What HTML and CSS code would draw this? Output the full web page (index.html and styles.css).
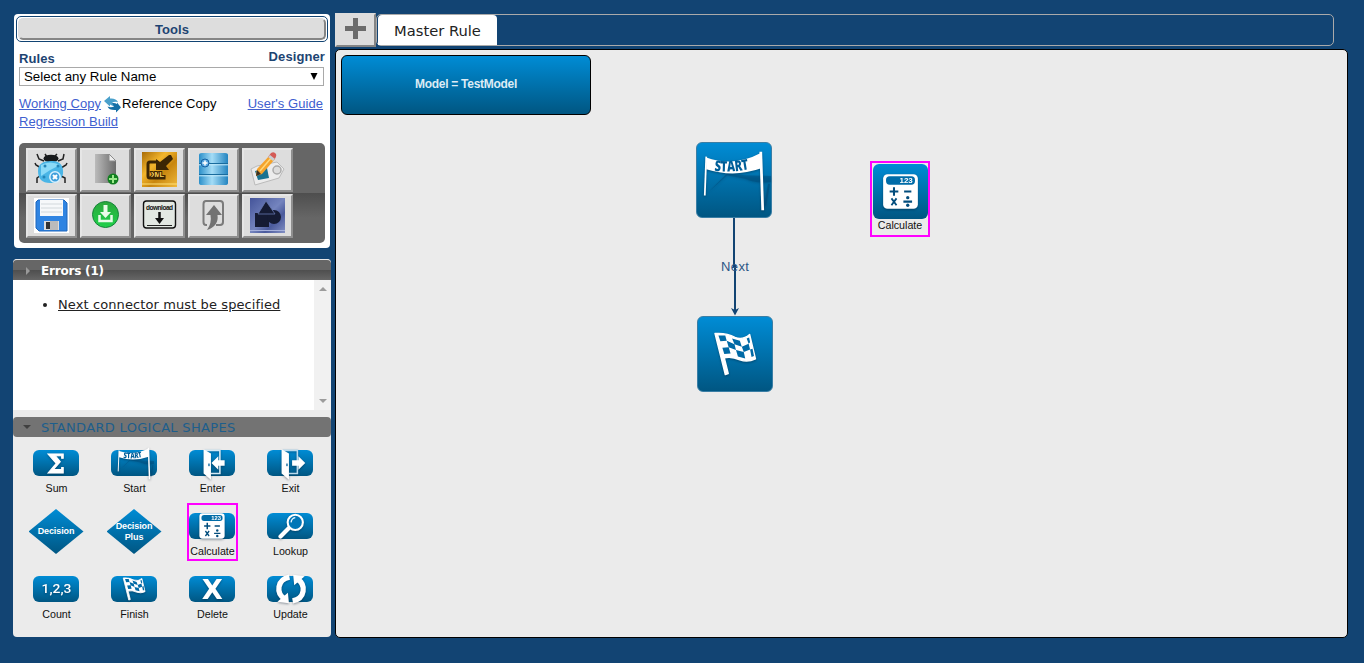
FILE: index.html
```
<!DOCTYPE html>
<html lang="en">
<head>
<meta charset="utf-8">
<title>Rule Designer</title>
<link rel="stylesheet" href="styles.css">
</head>
<body>
<svg class="defs" width="0" height="0" aria-hidden="true">
  <defs>
    <linearGradient id="gold" x1="0" y1="0" x2="1" y2="1"><stop offset="0" stop-color="#a86b08"/><stop offset=".35" stop-color="#f3b62c"/><stop offset=".6" stop-color="#c8860f"/><stop offset="1" stop-color="#f0b93a"/></linearGradient>
    <linearGradient id="steel" x1="0" y1="0" x2="1" y2="1"><stop offset="0" stop-color="#44549a"/><stop offset=".5" stop-color="#7484be"/><stop offset=".7" stop-color="#4a5a9c"/><stop offset="1" stop-color="#8390c4"/></linearGradient>
    <linearGradient id="page" x1="0" y1="0" x2="1" y2="0"><stop offset="0" stop-color="#bbb"/><stop offset="1" stop-color="#6b6b6b"/></linearGradient>
    <linearGradient id="cyan" x1="0" y1="0" x2="1" y2="0"><stop offset="0" stop-color="#2b8fc9"/><stop offset=".45" stop-color="#a4dcf6"/><stop offset="1" stop-color="#2384c0"/></linearGradient>
    <linearGradient id="green" x1="0" y1="0" x2="0" y2="1"><stop offset="0" stop-color="#2aa83c"/><stop offset="1" stop-color="#1fd04a"/></linearGradient>
  </defs>
  <symbol id="i-start" viewBox="0 0 76 76">
    <path d="M11 51 31 31 49 33 76 34V40Q60 42 50 37L31 33Z" fill="#004a78" opacity=".45"/>
    <path d="M74 42 70 64" stroke="#004a78" stroke-width="2" opacity=".5"/>
    <path d="M9.500 15Q38 25 66 10V26Q38 36 9.500 27Z" fill="#fff"/>
    <path d="M9.500 14 8 54" stroke="#fff" stroke-width="1.800" fill="none"/>
    <path d="M65.500 9 67.500 69" stroke="#fff" stroke-width="2.800" fill="none"/>
    <path id="banner" d="M18 28.500Q36 31 60 25.500" fill="none"/>
    <text class="g-start"><textPath href="#banner" textLength="36" lengthAdjust="spacingAndGlyphs">START</textPath></text>
  </symbol>
  <symbol id="i-flag" viewBox="0 0 76 76">
    <path d="M17.500 17Q29 16 38 21 46 24 53 18L59 43Q51 47 43 44 34 40 27 42L31 58 28 59Z" fill="#fff" stroke="#fff" stroke-width="1.500" stroke-linejoin="round"/>
    <path d="M21 19 28 19 29.500 24.500 23 25ZM35 22 43 24.500 45 30.500 37.500 28ZM29.500 24.500 37.500 28 39 34 31.500 31ZM45 30.500 52 27.500 53.500 33.500 47 36ZM25 31.500 31.500 31 33.500 37.500 27 38ZM39 34 47 36 48.500 42.500 41 40.500ZM50 22 52.500 21 53.500 26 52 27.500ZM53.500 33.500 56 32.500 57.500 40 55 41Z" fill="#006aa6"/>
  </symbol>
  <symbol id="i-calc" viewBox="0 0 76 76">
    <rect x="14" y="14" width="48" height="48" rx="6" fill="#fff"/>
    <rect x="18" y="17" width="40" height="11.500" rx="5" fill="#006ca8"/>
    <text class="g-123" x="55" y="26.800" text-anchor="end">123</text>
    <path d="M23 38H35M29 32V44M43 38H53M42 52H54" stroke="#024d7d" stroke-width="2.800"/>
    <circle cx="48" cy="46.500" r="2.300" fill="#024d7d"/><circle cx="48" cy="57" r="2.300" fill="#024d7d"/>
    <path d="M25.500 47.500 32.500 57M32.500 47.500 25.500 57" stroke="#024d7d" stroke-width="2.500"/>
  </symbol>
  <symbol id="i-sum" viewBox="0 0 76 76"><text class="g-sum" x="38" y="57" text-anchor="middle" textLength="34" lengthAdjust="spacingAndGlyphs">Σ</text></symbol>
  <symbol id="i-delete" viewBox="0 0 76 76"><text class="g-x" x="38.500" y="57" text-anchor="middle">X</text></symbol>
  <symbol id="i-count" viewBox="0 0 86 76"><text class="g-count" x="43" y="46" text-anchor="middle" textLength="57" lengthAdjust="spacingAndGlyphs">1,2,3</text></symbol>
  <symbol id="i-enter" viewBox="0 0 76 76">
    <path d="M24 14H53V58H36" fill="none" stroke="#d4e9f5" stroke-width="3"/>
    <path d="M22 12 36 20V70L22 58Z" fill="#fff"/><rect x="31" y="39" width="2.500" height="5" fill="#005f99"/>
    <path d="M37 38 50 25V33H62V43H50V51Z" fill="#fff"/>
  </symbol>
  <symbol id="i-exit" viewBox="0 0 76 76">
    <path d="M24 14H52V58H36" fill="none" stroke="#b9daed" stroke-width="3"/>
    <path d="M22 12 36 20V70L22 58Z" fill="#fff"/><rect x="31" y="39" width="2.500" height="5" fill="#005f99"/>
    <path d="M67 38 54 25V33H42V43H54V51Z" fill="#fff"/>
  </symbol>
  <symbol id="i-lookup" viewBox="0 0 76 76">
    <path d="M36 42 20 58" stroke="#fff" stroke-width="8" stroke-linecap="round"/>
    <circle cx="48" cy="31" r="14.500" fill="#0076b7" stroke="#fff" stroke-width="4"/>
    <path d="M40 31Q41 23 48 22" fill="none" stroke="#e8f6ff" stroke-width="2.500"/>
  </symbol>
  <symbol id="i-update" viewBox="0 0 76 76">
    <path d="M37 15.500C13 20 11 46 28 57M43 60.500C67 56 69 30 52 19" fill="none" stroke="#fff" stroke-width="10"/>
    <path d="M14 62 36 65 34 45ZM66 14 44 11 46 31Z" fill="#fff"/>
  </symbol>
</svg>

<div class="app">
  <aside class="sidebar">
    <section class="tools">
      <div class="title-frame"><h1 class="title">Tools</h1></div>
      <div class="labels"><span>Rules</span><span class="designer">Designer</span></div>
      <div class="select"><span>Select any Rule Name</span><svg width="8" height="7" viewBox="0 0 8 7"><path d="M.5 0H7.500L4 7Z"/></svg></div>
      <div class="links">
        <a class="working">Working Copy</a>
        <svg class="swap" width="17" height="17" viewBox="0 0 17 17"><path d="M0 5 6 0V2.500Q12 2 14 6 10 5 8 7L14 10Q9 11 6 8.500V10.500Z" fill="#4aa0cb"/><path d="M17 11.500 12 16.500V14Q5 14.500 3.500 10.500 7 12 10 10.500L8 7Q11 6.500 13 8V6.500Z" fill="#1670a6"/></svg>
        <span class="reference">Reference Copy</span>
        <a class="guide">User's Guide</a>
      </div>
      <div class="links"><a class="build">Regression Build</a></div>

      <div class="toolbar">
        <button class="tool"><svg width="36" height="36" viewBox="0 0 36 36"><path d="M11 10 6 8 4 3M25 10 30 8 31 3M8 17 3 14 2 12M28 17 33 14 34 12M8 24 4 27 4 32M28 25 32 27 32 32M14 6 12 3M21 6 24 3" fill="none" stroke="#222" stroke-width="1.500"/><ellipse cx="18" cy="7.500" rx="7.500" ry="3.800" fill="#17191b"/><path d="M18 10C27 9 31 15 30 23 28 30 23 32 17 32 9 32 5 28 5 20 5 13 10 10 18 10Z" fill="#4ab5e6"/><path d="M8 14Q17 9 27 14 18 18 8 25Z" fill="#8bdaf8"/><circle cx="12" cy="15" r="1.500" fill="#2485b8"/><circle cx="25" cy="15" r="1.500" fill="#2485b8"/><circle cx="11" cy="26" r="1.500" fill="#2485b8"/><circle cx="22" cy="26" r="5.200" fill="#3d9edb" stroke="#d8f1ff" stroke-width="1.500"/><path d="M20 24 24 28M24 24 20 28" stroke="#fff" stroke-width="2"/></svg></button>
        <button class="tool"><svg width="36" height="36" viewBox="0 0 36 36"><path d="M8 3H22L29 10V32H8Z" fill="url(#page)"/><path d="M22 3V10H29Z" fill="#ececec" stroke="#8b8b8b"/><circle cx="26" cy="28" r="5.500" fill="#128020"/><path d="M26 24V32M22 28H30" stroke="#9be88a" stroke-width="2"/></svg></button>
        <button class="tool"><svg width="36" height="36" viewBox="0 0 36 36"><rect x="1" y="1" width="35" height="35" fill="url(#gold)"/><path d="M1 33H36" stroke="#ffe27a" stroke-width="1"/><path d="M17 11H9Q7 11 7 13V25Q7 27 9 27H23V24" fill="none" stroke="#3c2604" stroke-width="3"/><path d="M30 4 32 8 25 15 28 19H15V8L19 11 28 4Z" fill="#3c2604"/><text class="g-xml" x="16.500" y="26" text-anchor="middle" textLength="13">XML</text></svg></button>
        <button class="tool"><svg width="36" height="36" viewBox="0 0 36 36"><path d="M4 4Q4 2 7 2H30Q33 2 33 4V32Q33 34 30 34H7Q4 34 4 32Z" fill="url(#cyan)"/><path d="M4 12.500H33M4 23.500H33" stroke="#196b9d" stroke-width="1.200"/><path d="M4 13.800H33M4 24.800H33" stroke="#c5ecfb"/><circle cx="10" cy="12" r="4" fill="#5ba9e0" stroke="#1662a4"/><path d="M10 9.500V14.500M7.500 12H12.500" stroke="#fff" stroke-width="1.500"/></svg></button>
        <button class="tool"><svg width="36" height="36" viewBox="0 0 36 36"><path d="M2 18 8 15 28 11 35 18 30 27 6 34Z" fill="#ececec" stroke="#bbb"/><circle cx="28" cy="19" r="4" fill="#ddd" stroke="#aaa" stroke-width="1.500"/><path d="M6 20 18 17 20 27 9 29Z" fill="#197391"/><path d="M8 18 21 4 26 8 13 23 7 25Z" fill="#f5a32b"/><path d="M11 20 23 6" stroke="#ffd87a" stroke-width="1.500"/><path d="M19 6 22 2Q25 0 27 3 28 5 25 9Z" fill="#d45b56"/><path d="M19 6 21 4 26 8 24 10Z" fill="#c9cfd3"/><path d="M7 25 8 19 12 23Z" fill="#3b3122"/></svg></button>
        <button class="tool"><svg width="36" height="36" viewBox="0 0 36 36"><rect x="1" y="1" width="35" height="35" fill="#fff"/><path d="M5 3H31L34 6V34H6L3 31V5Z" fill="#2f84e2" stroke="#1f66bd"/><rect x="7" y="3" width="23" height="16" fill="#f6f8fa"/><path d="M8 7H29M8 11H29M8 15H29" stroke="#d2d8dc"/><rect x="11" y="24" width="15" height="9" fill="#ddd"/><rect x="13" y="25" width="4" height="7" fill="#333"/><rect x="17" y="24" width="8" height="9" fill="#bbb"/></svg></button>
        <button class="tool"><svg width="36" height="36" viewBox="0 0 36 36"><circle cx="18.500" cy="17.500" r="13" fill="url(#green)" stroke="#16833a"/><path d="M18.500 8V17" stroke="#e9fbe9" stroke-width="4"/><path d="M13 15H24L18.500 21Z" fill="#e9fbe9"/><path d="M12.500 18V24H24.500V18" fill="none" stroke="#e9fbe9" stroke-width="2.500"/></svg></button>
        <button class="tool"><svg width="36" height="36" viewBox="0 0 36 36"><rect x="2.500" y="4" width="32" height="27" rx="3" fill="#e3e8e3" stroke="#111" stroke-width="1.400"/><text class="g-down" x="18.500" y="13" text-anchor="middle" textLength="27">download</text><path d="M18.500 15V23" stroke="#111" stroke-width="2.500"/><path d="M14 21H23L18.500 27Z" fill="#111"/><path d="M6 28.500H31" stroke="#222"/></svg></button>
        <button class="tool"><svg width="36" height="36" viewBox="0 0 36 36"><path d="M12 28H11Q8.500 28 8.500 25V7Q8.500 4 11 4H25Q28 4 28 7V25Q28 28 25 28H21" fill="none" stroke="#7b7b7b" stroke-width="2"/><path d="M19 8 27 18H22.500Q24 29 12 33 17 26 15.500 18H11Z" fill="#727272"/></svg></button>
        <button class="tool"><svg width="36" height="36" viewBox="0 0 36 36"><rect x="1" y="1" width="35" height="35" fill="url(#steel)"/><path d="M1 33.500H36" stroke="#a7b2dc"/><rect x="6" y="16" width="14" height="14" fill="#151b34"/><circle cx="25" cy="20" r="7" fill="#151b34"/><path d="M17 4 26 17H9Z" fill="#151b34" stroke="#6677b0" stroke-width=".8"/></svg></button>
      </div>
    </section>

    <section class="panel">
      <header class="errors-head"><svg width="4" height="8" viewBox="0 0 4 8"><path d="M0 0 4 4 0 8Z" fill="#999"/></svg><span>Errors (1)</span></header>
      <div class="errors">
        <ul class="error-list"><li><a>Next connector must be specified</a></li></ul>
        <div class="scroll"><svg width="8" height="4" viewBox="0 0 8 4"><path d="M0 4 4 0 8 4Z"/></svg><svg width="8" height="4" viewBox="0 0 8 4"><path d="M0 0 4 4 8 0Z"/></svg></div>
      </div>
      <header class="shapes-head"><svg width="8" height="4" viewBox="0 0 8 4"><path d="M0 0H8L4 4Z" fill="#404040"/></svg><span>STANDARD LOGICAL SHAPES</span></header>
      <div class="palette">
        <div class="shape"><div class="tile"><svg class="glyph"><use href="#i-sum"/></svg></div><span>Sum</span></div>
        <div class="shape"><div class="tile"><svg class="glyph"><use href="#i-start"/></svg></div><span>Start</span></div>
        <div class="shape"><div class="tile"><svg class="glyph"><use href="#i-enter"/></svg></div><span>Enter</span></div>
        <div class="shape"><div class="tile"><svg class="glyph"><use href="#i-exit"/></svg></div><span>Exit</span></div>
        <div class="shape"><div class="diamond">Decision</div></div>
        <div class="shape"><div class="diamond">Decision<br>Plus</div></div>
        <div class="shape picked"><div class="tile"><svg class="glyph"><use href="#i-calc"/></svg></div><span>Calculate</span></div>
        <div class="shape"><div class="tile"><svg class="glyph"><use href="#i-lookup"/></svg></div><span>Lookup</span></div>
        <div class="shape"><div class="tile"><svg class="glyph wide"><use href="#i-count"/></svg></div><span>Count</span></div>
        <div class="shape"><div class="tile"><svg class="glyph"><use href="#i-flag"/></svg></div><span>Finish</span></div>
        <div class="shape"><div class="tile"><svg class="glyph"><use href="#i-delete"/></svg></div><span>Delete</span></div>
        <div class="shape"><div class="tile"><svg class="glyph"><use href="#i-update"/></svg></div><span>Update</span></div>
      </div>
    </section>
  </aside>

  <main class="work">
    <div class="tabs">
      <button class="add"><svg width="21" height="21" viewBox="0 0 21 21"><path d="M8 0H13V8H21V13H13V21H8V13H0V8H8Z" fill="#6b6b6b"/></svg></button>
      <div class="strip"><div class="tab">Master Rule</div></div>
    </div>
    <div class="canvas">
      <div class="model">Model = TestModel</div>
      <svg class="wire" width="12" height="100" viewBox="0 0 12 100"><path d="M5 0V49H6V94" fill="none" stroke="#124473" stroke-width="2"/><path d="M2 91 6 93 10 91 6 98.500Z" fill="#124473"/></svg>
      <div class="next">Next</div>
      <div class="node start"><svg class="fill"><use href="#i-start"/></svg></div>
      <div class="node finish"><svg class="fill"><use href="#i-flag"/></svg></div>
      <div class="selected"><div class="node calc"><svg class="fill"><use href="#i-calc"/></svg></div><span>Calculate</span></div>
    </div>
  </main>
</div>
</body>
</html>
```
FILE: styles.css
```
* { box-sizing: border-box; }
body { margin: 0; height: 663px; overflow: hidden; background: #124473; font-family: "Liberation Sans", Arial, sans-serif; font-size: 13px; color: #000; }
svg { display: block; flex: none; }
.defs { position: absolute; }
button { padding: 0; font: inherit; }
a { color: #4060cf; text-decoration: underline; }

.app { display: flex; gap: 4px; padding: 13px 16px 0 13px; }
.sidebar { width: 318px; flex: none; padding-top: 1px; }

.tools { height: 234px; margin: 0 1px; padding: 2px; background: #fff; border-radius: 4px; }
.title-frame { height: 26px; padding: 1px; border: 1px solid #124473; border-radius: 5px; }
.title { display: flex; align-items: center; justify-content: center; height: 22px; margin: 0; border: 2px solid; border-color: #ddd #858585 #858585 #ddd; border-radius: 5px; background: #ddd; color: #1d4472; font-size: 13px; letter-spacing: .1px; }
.labels { display: flex; justify-content: space-between; height: 25px; padding: 9px 3px 0 3px; color: #1d4472; font-weight: bold; line-height: 15px; letter-spacing: .1px; }
.designer { margin-top: -2px; }
.select { display: flex; align-items: center; justify-content: space-between; width: 305px; height: 19px; margin-left: 3px; padding: 0 5px 0 4px; border: 1px solid #a9a9a9; font-size: 13.300px; }
.links { display: flex; height: 18px; margin-left: 3px; line-height: 18px; letter-spacing: .05px; }
.select + .links { margin-top: 9px; }
.swap { margin: 1px 1px 0 3px; }
.guide { margin-left: auto; margin-right: 5px; }
.toolbar { display: grid; grid-template-columns: repeat(5, 51px); grid-auto-rows: 44px; gap: 2px 3px; width: 306px; height: 100px; margin: 12px 0 0 3px; padding: 5px 7px; border-radius: 5px; background: linear-gradient(#666 0 50%, #4e4e4e 50%, #666 75%); }
.tool { display: flex; align-items: center; justify-content: center; padding: 0 2px 3px 0; border: 2px solid; border-color: #e6e6e6 #8f8f8f #8f8f8f #e6e6e6; background: #ddd; }

.panel { margin-top: 11px; height: 378px; background: #ebebeb; border-radius: 4px; overflow: hidden; }
.errors-head { display: flex; align-items: center; gap: 11px; height: 21px; padding: 1px 0 0 13px; border-top: 1px solid #e8e8e8; border-radius: 4px 4px 0 0; background: linear-gradient(#666 0 50%, #4e4e4e 50%, #666); color: #fff; font: bold 12px Verdana, "DejaVu Sans", sans-serif; letter-spacing: -.2px; }
.errors { display: flex; justify-content: space-between; height: 130px; background: #fff; }
.error-list { margin: 17px 0 0 45px; padding: 0; font: 13px/16px Verdana, "DejaVu Sans", sans-serif; letter-spacing: .1px; color: #222; }
.error-list a { color: #222; }
.scroll { display: flex; flex-direction: column; align-items: center; justify-content: space-between; width: 17px; padding: 7px 0; background: #f1f1f1; fill: #9c9c9c; }
.shapes-head { display: flex; align-items: center; gap: 10px; height: 20px; margin-top: 7px; padding-left: 10px; border-radius: 4px; background: #737373; color: #1d5e8c; font: 13px Verdana, "DejaVu Sans", sans-serif; letter-spacing: .32px; }
.palette { display: grid; grid-template-columns: repeat(4, 78px); grid-auto-rows: 63px; padding: 4px 0 0 4px; }
.shape { display: flex; flex-direction: column; align-items: center; width: 49px; height: 56px; margin: 0 14px 0 15px; padding-top: 9px; font-size: 10.700px; line-height: 13px; white-space: nowrap; color: #111; }
.shape > span { margin-top: 6px; }
.picked { outline: 2px solid #f0f; outline-offset: -1.500px; }
.tile { display: flex; align-items: center; justify-content: center; width: 46px; height: 26px; margin-right: 1px; border-radius: 6px; background: linear-gradient(#008cd5, #005682); }
.glyph { width: 40px; height: 40px; filter: drop-shadow(0 1px 1px rgba(0, 20, 40, .4)); }
.wide { width: 45px; }
.diamond { display: flex; align-items: center; justify-content: center; width: 55px; height: 45px; margin: -4px 1px 0 0; background: linear-gradient(#008cd5, #005682); clip-path: polygon(50% 0, 100% 50%, 50% 100%, 0 50%); color: #fff; font-size: 9px; font-weight: bold; line-height: 11px; letter-spacing: -.1px; text-align: center; }

.work { flex: 1; }
.tabs { display: flex; height: 33px; }
.add { display: flex; align-items: center; justify-content: center; width: 41px; height: 34px; padding-bottom: 3px; border: 2px solid; border-color: #ddd #858585 #858585 #ddd; background: #ddd; }
.strip { width: 958px; height: 32px; margin: 1px 0 0 0; padding: 0 0 0 1px; border: 1px solid #aaa; border-radius: 5px; }
.tab { display: flex; align-items: center; justify-content: center; width: 119px; height: 30px; padding-top: 1px; border-radius: 4px 4px 0 0; background: #fff; color: #222; font: 14.700px Verdana, "DejaVu Sans", sans-serif; }
.canvas { position: relative; width: 1013px; height: 589px; margin-top: 3px; border: 1px solid #000; border-radius: 5px; background: #ebebeb; }
.model { position: absolute; left: 5px; top: 5px; display: flex; align-items: center; justify-content: center; width: 250px; height: 60px; padding-bottom: 3px; border: 1px solid #000; border-radius: 6px; background: linear-gradient(#008cd5, #005682); color: #dcebf5; font-size: 12px; font-weight: bold; letter-spacing: -.28px; }
.wire { position: absolute; left: 393px; top: 167px; }
.next { position: absolute; left: 385px; top: 209px; color: #2b5685; line-height: 15px; letter-spacing: .4px; }
.node { position: absolute; width: 76px; height: 76px; border-radius: 6px; background: linear-gradient(#008cd5, #005682); border: 1px solid #3a7ea5; }
.start { left: 360px; top: 92px; }
.finish { left: 361px; top: 266px; }
.fill { width: 100%; height: 100%; filter: drop-shadow(0 1px 1px rgba(0, 20, 40, .4)); }
.selected { position: absolute; left: 534px; top: 111px; display: flex; flex-direction: column; align-items: center; width: 60px; height: 76px; padding-top: 1px; border: 2px solid #f0f; font-size: 10.700px; line-height: 13px; color: #111; }
.selected .calc { position: static; width: 55px; height: 55px; border: 0; }

.g-start { font: 800 15px "Open Sans", sans-serif; fill: #005f99; }
.g-123 { font: bold 11px "Liberation Sans", sans-serif; fill: #fff; }
.g-sum { font: bold 50px "DejaVu Serif", serif; fill: #fff; stroke: #fff; stroke-width: 2px; }
.g-x { font: bold 52px "DejaVu Sans", sans-serif; fill: #fff; }
.g-count { font: 500 23px Roboto, "Liberation Sans", sans-serif; fill: #fff; }
.g-xml { font: bold 7.500px "Liberation Sans", sans-serif; fill: #f7cf58; stroke: #3c2604; stroke-width: 2px; paint-order: stroke; }
.g-down { font: bold 6.500px "Liberation Sans", sans-serif; fill: #111; }
```
